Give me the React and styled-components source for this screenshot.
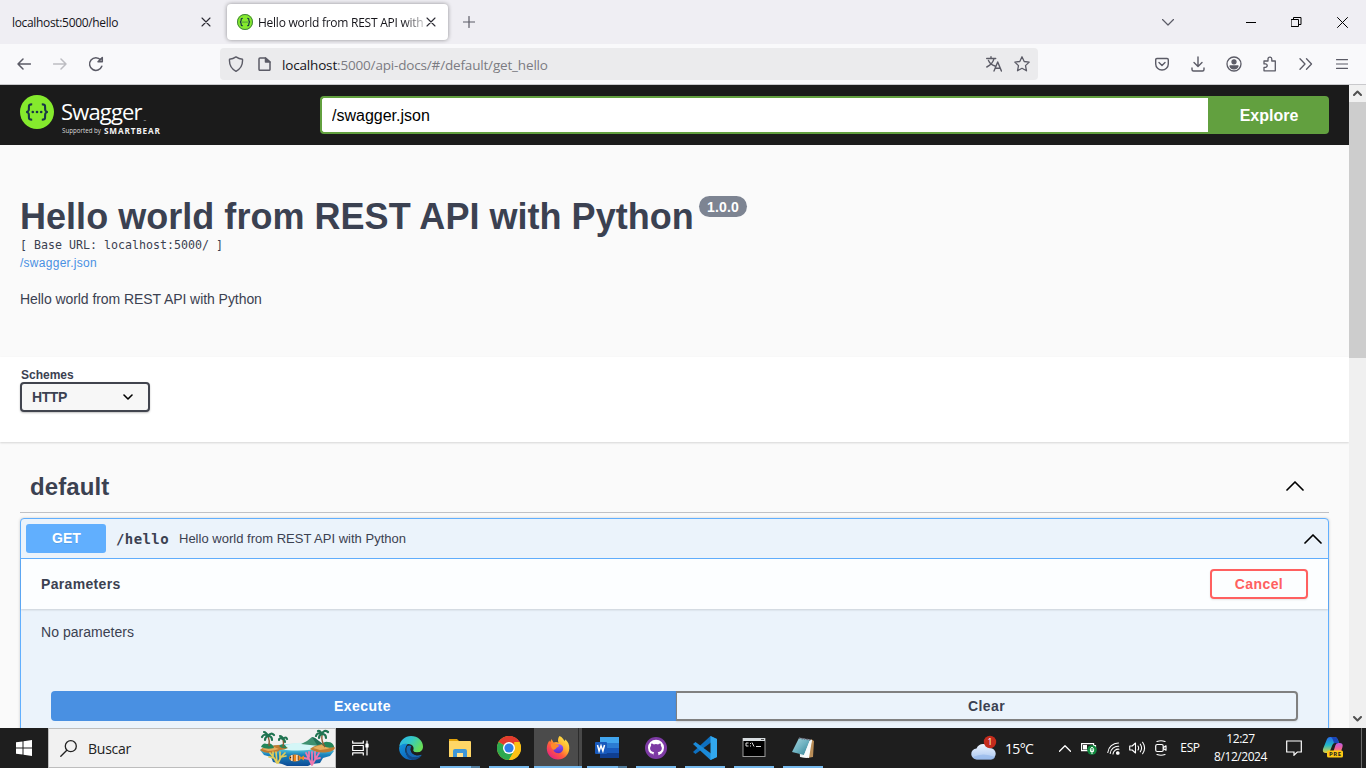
import React from "react";
import styled, { createGlobalStyle } from "styled-components";

const Global = createGlobalStyle`
  * { box-sizing: border-box; }
  body { margin: 0; overflow: hidden; background: #fafafa; }
  button, input { font-family: inherit; }
  svg { display: block; flex: none; }
`;

const ui = `"Open Sans", "Noto Sans", sans-serif`;
const arial = `"Liberation Sans", Arial, sans-serif`;
const mono = `"DejaVu Sans Mono", monospace`;

const Screen = styled.div`
  width: 1366px; height: 768px; display: flex; flex-direction: column;
  overflow: hidden; font-family: ${arial}; color: #3b4151;
`;

/* Browser chrome */
const TabStrip = styled.div`
  height: 44px; flex: none; background: #efeef3; display: flex; align-items: center;
  font-family: ${ui}; font-size: 12px; color: #15141a;
`;
const Tab = styled.div`
  width: ${p => p.$w}px; height: 36px; display: flex; align-items: center;
  padding: 0 ${p => p.$pr}px 0 ${p => p.$pl}px; margin-left: ${p => p.$ml || 0}px;
  border-radius: 4px;
  background: ${p => (p.$active ? "#fff" : "transparent")};
  box-shadow: ${p => (p.$active ? "0 0 4px rgba(0,0,0,.4)" : "none")};
`;
const TabLabel = styled.span`
  flex: 1; min-width: 0; white-space: nowrap; line-height: 18px; padding-top: 2px;
  letter-spacing: ${p => p.$ls || 0}px; margin-left: ${p => p.$ml || 0}px;
  -webkit-mask-image: ${p => (p.$fade ? "linear-gradient(90deg,#000 86%,transparent 103%)" : "none")};
`;
const Slot = styled.div`
  width: ${p => p.$w}px; height: 100%; flex: none; display: flex; align-items: center; justify-content: center;
  margin-left: ${p => p.$ml || 0}px;
`;
const Spacer = styled.div`flex: 1;`;
const NavBar = styled.div`
  height: 41px; flex: none; background: #f9f9fb; border-bottom: 1px solid #c9c9cc;
  display: flex; align-items: center; padding-left: 6px; padding-right: 6px;
`;
const UrlBar = styled.div`
  width: 818px; height: 32px; margin-left: 106px; border-radius: 4px; background: #ebebed;
  display: flex; align-items: center; font-family: ${ui};
`;
const Url = styled.span`
  flex: 1; margin-left: 6px; padding-top: 2px; font-size: 13.5px; letter-spacing: -0.17px; line-height: 20px; color: #7b7b82; white-space: nowrap;
  b { font-weight: 400; color: #15141a; }
`;

/* Page */
const Viewport = styled.div`height: 643px; flex: none; display: flex; overflow: hidden;`;
const Page = styled.main`width: 1349px; height: 643px; overflow: hidden; background: #fafafa;`;
const ScrollTrack = styled.div`
  width: 17px; height: 643px; background: #f0f0f0; display: flex; flex-direction: column; align-items: center;
`;
const ScrollThumb = styled.div`width: 17px; height: 256px; background: #cdcdcd;`;
const ScrollArrow = styled.div`width: 17px; height: 17px; display: flex; align-items: center; justify-content: center; padding-bottom: 1px;`;

const Topbar = styled.header`
  height: 60px; background: #1b1b1b; display: flex; align-items: center; padding: 0 20px;
`;
const Brand = styled.div`width: 300px; height: 60px; display: flex; padding-top: 10px;`;
const BrandText = styled.div`margin-left: 8px; font-family: ${ui}; color: #fff; display: flex; flex-direction: column;`;
const BrandName = styled.div`
  font-size: 22px; line-height: 26px; letter-spacing: -0.85px; height: 29px; padding-top: 3px; margin-left: -1px; white-space: nowrap;
  small { font-size: 5px; letter-spacing: 0; margin-left: 2px; }
`;
const BrandSub = styled.div`
  display: flex; align-items: center; height: 14px; font-size: 6.2px; line-height: 10px; color: #ddd; white-space: nowrap;
  b { font-size: 8.2px; letter-spacing: 0.85px; margin-left: 3px; color: #f2f2f2; font-weight: 700; }
`;
const SpecInput = styled.input`
  width: 888px; height: 38px; border: 2px solid #62a03f; border-right: 0; border-radius: 4px 0 0 4px;
  padding: 2px 10px 0; font-family: ${arial}; font-size: 16px; color: #000; background: #fff; outline: none;
`;
const ExploreButton = styled.button`
  width: 121px; height: 38px; border: 0; border-radius: 0 4px 4px 0; background: #62a03f; color: #fff;
  font-family: ${arial}; font-weight: 700; font-size: 16px; padding: 2px 0 0 1px;
`;

const Info = styled.section`height: 212px; padding: 50px 20px 0;`;
const TitleRow = styled.div`display: flex; align-items: flex-start; height: 43px;`;
const Title = styled.h2`margin: 1px 0 0; font-size: 36px; line-height: 42px; font-weight: 700; white-space: nowrap; letter-spacing: 0.03px; width: 673px;`;
const Version = styled.span`
  margin: 1px 0 0 6px; width: 48px; height: 21px; border-radius: 11px; background: #7d8492; color: #fff;
  font-size: 14px; font-weight: 700; line-height: 23px; text-align: center; letter-spacing: 0.15px;
`;
const BaseUrl = styled.div`font-family: ${mono}; font-size: 11.63px; line-height: 14px; height: 17px; white-space: pre;`;
const SpecLink = styled.div`font-size: 12px; line-height: 16px; color: #4990e2; letter-spacing: 0.27px;`;
const Description = styled.p`margin: 20px 0 0; font-size: 14px; line-height: 16px; letter-spacing: -0.06px;`;

const Schemes = styled.section`
  height: 85px; background: #fff; padding: 11px 20px 0; box-shadow: 0 1px 2px rgba(0,0,0,.15);
`;
const SchemesLabel = styled.div`font-size: 12px; font-weight: 700; line-height: 14px; padding-left: 1px;`;
const Select = styled.div`
  width: 130px; height: 30px; border: 2px solid #41444e; border-radius: 4px; background: #f7f7f7;
  box-shadow: 0 1px 2px rgba(0,0,0,.25); display: flex; align-items: center; justify-content: space-between;
  padding: 0 15px 0 10px; font-size: 14px; font-weight: 700; letter-spacing: -0.4px;
`;

const TagSection = styled.section`padding: 22px 20px 0;`;
const TagHeader = styled.h3`
  margin: 0 0 5px; height: 49px; border-bottom: 1px solid #c0c1c5; padding: 0 25px 5px 10px;
  display: flex; align-items: center; justify-content: space-between; font-size: 24px; font-weight: 700;
  span { padding-top: 3px; letter-spacing: 0.1px; }
`;
const OpBlock = styled.div`
  height: 240px; border: 1px solid #61affe; border-radius: 4px; background: #ebf3fb; box-shadow: 0 0 3px rgba(0,0,0,.19);
`;
const OpSummary = styled.div`
  height: 40px; border-bottom: 1px solid #61affe; display: flex; align-items: center; padding: 0 6px 0 5px;
`;
const Method = styled.span`
  width: 80px; height: 29px; border-radius: 3px; background: #61affe; color: #fff; font-size: 14px; font-weight: 700;
  line-height: 29px; text-align: center; padding-left: 1px; text-shadow: 0 1px 0 rgba(0,0,0,.1);
`;
const Path = styled.span`font-family: ${mono}; font-size: 14px; font-weight: 700; margin-left: 10px; letter-spacing: 0.4px; padding-top: 1px;`;
const Summary = styled.span`font-size: 13px; margin-left: 10px; flex: 1; letter-spacing: 0.01px;`;
const OpSectionHeader = styled.div`
  height: 50px; background: rgba(255,255,255,.85); box-shadow: 0 1px 2px rgba(0,0,0,.15);
  display: flex; align-items: center; justify-content: space-between; padding: 0 20px; font-size: 14px; font-weight: 700;
  letter-spacing: 0.33px;
`;
const Outline = styled.button`
  width: ${p => p.$w}px; height: 30px; border: 2px solid ${p => p.$line}; border-radius: ${p => p.$radius || "4px"};
  border-left-width: ${p => p.$left || 2}px;
  background: transparent; color: ${p => p.$ink}; font-family: ${arial}; font-size: 14px; font-weight: 700; padding: 0;
  letter-spacing: ${p => p.$ls || 0}px; box-shadow: 0 1px 2px rgba(0,0,0,.1);
`;
const NoParams = styled.div`height: 82px; padding: 15px 20px 0; font-size: 14px; line-height: 16px; letter-spacing: 0.04px;`;
const ButtonRow = styled.div`display: flex; padding: 0 30px;`;
const Execute = styled.button`
  width: 625px; height: 30px; border: 0; border-radius: 4px 0 0 4px; background: #4990e2; color: #fff; padding: 0 2px 0 0;
  font-family: ${arial}; font-size: 14px; font-weight: 700; letter-spacing: 0.45px;
`;

/* Taskbar */
const Taskbar = styled.footer`
  height: 40px; flex: none; background: #1e1e1e; display: flex; align-items: center; color: #fff; font-family: ${ui};
`;
const SearchBox = styled.div`
  width: 288px; height: 40px; background: #f1f1f1; border: 1px solid #bdbdbd; display: flex; align-items: center; padding-left: 11px;
  color: #222; font-size: 14px;
  span { margin-left: 11px; flex: 1; letter-spacing: -0.25px; }
`;
const TaskApp = styled.div`
  width: 49px; height: 40px; flex: none; display: flex; flex-direction: column; align-items: center; justify-content: space-between; padding-top: 8px;
  background: ${p => (p.$active ? "linear-gradient(90deg,transparent 0 1px,#4b4b4b 1px 45px,#2c2c2c 45px 46px,#484848 46px)" : "transparent")};
`;
const RunBar = styled.div`
  width: ${p => (p.$wide ? 48 : 40)}px; height: 2px; flex: none;
  background: ${p => (p.$split ? "linear-gradient(90deg,#76b9ed 0 31px,#527d9d 31px)" : p.$off ? "transparent" : "#76b9ed")};
`;
const Temp = styled.span`font-size: 14px; width: 30px; margin-left: 8px; letter-spacing: -0.65px; white-space: nowrap;`;
const Lang = styled.span`font-size: 12px; width: 22px; letter-spacing: -0.4px; text-align: center; padding-bottom: 1px;`;
const Clock = styled.div`
  width: 60px; display: flex; flex-direction: column; align-items: center; font-size: 12px; line-height: 18px; white-space: nowrap; letter-spacing: -0.45px;
`;
const ShowDesktop = styled.div`width: 5px; height: 40px; border-left: 1px solid #6a6a6a;`;

const Line = ({ w, h = w, sw = 1.2, color = "#5b5b66", children, vb }) => (
  <svg width={w} height={h} viewBox={vb || `0 0 ${w} ${h}`} fill="none" stroke={color} strokeWidth={sw} strokeLinecap="round" strokeLinejoin="round">{children}</svg>
);
const Close = () => <Line w={10} sw={1.1} color="#2b2a33"><path d="M1 1l8 8M9 1l-8 8" /></Line>;

const SwaggerMark = ({ size, dark = "#173647" }) => (
  <svg width={size} height={size} viewBox="0 0 34 34">
    <circle cx="17" cy="17" r="17" fill="#85ea2d" />
    {size < 20 && <circle cx="17" cy="17" r="16" fill="none" stroke="#3f7a47" strokeWidth="2" />}
    <g fill="none" stroke={dark} strokeWidth={size < 20 ? 2.6 : 2.1}>
      <path d="M12.2 9.2c-3 0-3.4 1-3.3 3.3 0 2.600.1 4-2.600 4.500 2.700.5 2.600 1.900 2.600 4.500-.1 2.300.3 3.300 3.300 3.300" />
      <path d="M21.800 9.200c3 0 3.400 1 3.300 3.300 0 2.600-.1 4 2.600 4.500-2.700.5-2.600 1.900-2.600 4.500.1 2.300-.3 3.300-3.300 3.300" />
    </g>
    <g fill={dark}><circle cx="12.800" cy="17" r="1.300" /><circle cx="17" cy="17" r="1.300" /><circle cx="21.200" cy="17" r="1.300" /></g>
  </svg>
);

const Chevron = () => <Line w={18} h={10} sw={1.700} color="#000"><path d="M1 9l8-8 8 8" /></Line>;

const Beach = () => (
  <svg width="76" height="38" viewBox="0 0 76 38">
    <defs>
      <linearGradient id="sea" x1="0" y1="0" x2="0" y2="1"><stop offset="0" stopColor="#9fe6f0" /><stop offset=".3" stopColor="#4bbad6" /><stop offset=".5" stopColor="#1b84bd" /><stop offset="1" stopColor="#0d4b95" /></linearGradient>
    </defs>
    <path d="M10 17q28-5 60 0l5 5-4 5-7 2-3 5-8 1-4 2H28l-5-2-9-2-2-5-7-2-4-5z" fill="url(#sea)" />
    <path d="M27 16q14-4 26-1l8 3q-12 5-34 3-6-1-8-3z" fill="#d4f6f7" />
    <path d="M42 15l6-3 5-4 3 1 3 3 5 3-4 2z" fill="#3f9070" />
    <path d="M53 8l3 1 8 6-6 1z" fill="#236f57" />
    <path d="M1 21q4-4 11-4 8-2 14 0l3 2q-4 2-8 2-3 3-10 3-6 0-10-3z" fill="#c07c32" />
    <path d="M3 20q5-3 12-2l5 2q-6 2-11 2z" fill="#e6ad5c" />
    <path d="M51 20q3-3 9-4 8-3 14 0l2 3q-1 3-7 4-10 2-18-3z" fill="#c07c32" />
    <path d="M54 19q7-4 16-3l4 2q-7 3-13 3z" fill="#e6ad5c" />
    <path d="M2 18q2-5 6-3 5-2 7 4-7 2-13-1zM20 17q3-3 6-1l2 3q-5 1-8-2zM63 16q2-4 6-3 5 0 6 5-7 2-12-2z" fill="#24865a" />
    <g fill="none" stroke="#8d5a32" strokeWidth="1.400"><path d="M9 7q2 5 1 10M24 10q1 4 0 8M63 6q-1 6 3 12" /></g>
    <g fill="none" stroke="#1f7350" strokeWidth="2.200" strokeLinecap="round"><path d="M9 7q-4-3-6 1M9 7q-2-4-4-4M9 7q3-4 6-1M9 7q4 0 4 4M9 7q-3 1-3 4M24 10q-4-2-4 1M24 10q-1-3-3-3M24 10q3-3 4 0M24 10q2 1 2 3M63 5q-5-2-6 2M63 5q-2-4-4-3M63 5q2-5 6-2M63 5q4 0 4 4M63 5q-3 1-3 4" /></g>
    <g fill="none" stroke="#e2cc58" strokeWidth="1.700" strokeLinecap="round"><path d="M18 34l-3-5-4-5M18 34l-1-11M19 34l3-6 4-4M15 29l-5-1M22 28l5-1M21 30v-7M14 27v-4" /></g>
    <g fill="none" stroke="#ec78ae" strokeWidth="1.800" strokeLinecap="round"><path d="M53 36l-3-6-3-6M53 36v-13M53 36l4-7 3-5M50 30l-5-1M56 30l5-1M50 28v-5M56 29v-6" /></g>
    <ellipse cx="36" cy="29" rx="6" ry="3.400" fill="#f28a1d" /><path d="M41 29l4-2.500v5z" fill="#f28a1d" />
    <path d="M33 26v6M38 26v6" stroke="#fff" strokeWidth="1.300" /><path d="M34.200 26v6M39.200 26.500v5" stroke="#333" strokeWidth=".7" /><circle cx="31.500" cy="28.500" r=".7" fill="#222" />
  </svg>
);

const Edge = () => (
  <svg width="24" height="24" viewBox="0 0 24 24">
    <defs>
      <linearGradient id="e1" x1="0" y1="0" x2="1" y2=".5"><stop offset="0" stopColor="#2bb2ef" /><stop offset=".5" stopColor="#34c8c6" /><stop offset="1" stopColor="#67de58" /></linearGradient>
      <linearGradient id="e2" x1="0" y1="0" x2=".7" y2="1"><stop offset="0" stopColor="#1496df" /><stop offset="1" stopColor="#0d62b8" /></linearGradient>
    </defs>
    <path d="M.2 11C1 4 6 0 12 0c7 0 12 5 12 10.500 0 4-3 6-6.500 6-2.500 0-4-.9-3.500-2 1.500-2 .5-6.500-5-6.500C4.500 8 1 9.500.2 11z" fill="url(#e1)" />
    <path d="M.1 11.500C1.500 8 5 7 9 8c-3 2-4 8-.5 12 1.500 2 4 3.700 6 3.500-1 .4-2 .5-3 .5C5 23.800-.4 18 .1 11.500z" fill="url(#e2)" />
    <path d="M8.200 10c-3 5 1 11.500 8 11.500 2.500 0 4.500-.7 6.200-2-2 3.200-5.500 4.700-8.500 4.400C8 23 4.500 16 8.200 10z" fill="#114a8b" />
    <path d="M8.200 10c-2.500 5 1 11.500 8 11.500 2.500 0 4.500-.7 6.200-2 .4-.7-.2-.9-.8-.5-4 1.500-10-.5-10-6 0-1.500.5-2.500.8-3-1.500-.8-3.200-.8-4.200 0z" fill="#1668b5" />
    <path d="M14.200 14.200c-.7-.8-2.200-1.200-2.600-1.200 0 4 3.400 6.300 7.500 6l2-.8q.8-1.300-.5-2.200c-1 .5-6 1-6.400-1.800z" fill="#1e1e1e" />
  </svg>
);
const Explorer = () => (
  <svg width="24" height="24" viewBox="0 0 24 24">
    <path d="M1 3h8l2 2v3H1z" fill="#e2a30b" /><path d="M1 5h21q1 0 1 1v15H1z" fill="#ffd666" />
    <path d="M5 21v-6q0-2 2-2h10q2 0 2 2v6h-4v-4H9v4z" fill="#3d97d9" /><path d="M9 17h6v4H9z" fill="#ffe291" />
  </svg>
);
const Chrome = () => (
  <svg width="24" height="24" viewBox="0 0 24 24">
    <circle cx="12" cy="12" r="12" fill="#fbc116" />
    <path d="M12 12L1.600 6A12 12 0 0 1 22.400 6z" fill="#e33b2e" /><path d="M12 6h10.400A12 12 0 0 0 12 0z" fill="#e33b2e" />
    <path d="M1.600 6A12 12 0 0 0 12 24l5.200-9L12 12z" fill="#2da94f" />
    <path d="M12 24l5.200-9a6 6 0 0 0 0-6V6h5.200A12 12 0 0 1 12 24z" fill="#fbc116" />
    <circle cx="12" cy="12" r="6" fill="#fff" /><circle cx="12" cy="12" r="4.600" fill="#2e7de9" />
  </svg>
);
const Firefox = () => (
  <svg width="24" height="24" viewBox="0 0 24 24">
    <defs>
      <linearGradient id="f1" x1=".9" y1=".1" x2=".15" y2="1"><stop offset="0" stopColor="#ffe94a" /><stop offset=".35" stopColor="#ffaf2e" /><stop offset=".6" stopColor="#ff5b3c" /><stop offset="1" stopColor="#e5178e" /></linearGradient>
      <linearGradient id="f2" x1="0" y1="0" x2="0" y2="1"><stop offset="0" stopColor="#9059ff" /><stop offset="1" stopColor="#5a2bc4" /></linearGradient>
    </defs>
    <path d="M13.500 0c3 1.300 4 3.500 5 5 .8-.5.800-1 .700-1.700C22 5.500 23.500 9 23.300 12.500 23 19 18 23.500 12 23.500S.8 19 .8 12.500c0-3.500 1.200-6 2.700-8L4 6.500 5.500 3l2 3.500q3-1 5 .2C11.500 4.500 12 2 13.500 0z" fill="url(#f1)" />
    <path d="M8 10c2-1 5-3 8-.5 2.500 2.500 1 7.500-3.500 7.700C9 17.300 7 15 7.500 12.500z" fill="url(#f2)" />
    <path d="M5 8c2-1 4-.5 5 .8 1 .2 2.500.200 3 .7-.3 1.500-2 1.500-2.700 2.500-.8 1.500-2 2-3.300 1.500C5.500 12.500 4.500 10.500 5 8z" fill="#ff8a2a" />
  </svg>
);
const Word = () => (
  <svg width="24" height="24" viewBox="0 0 24 24">
    <path d="M5 1h19v6H5z" fill="#41a5ee" /><path d="M5 7h19v5H5z" fill="#2b7cd3" /><path d="M5 12h19v5H5z" fill="#185abd" /><path d="M5 17h19v5H5z" fill="#103f91" />
    <rect x="0" y="6" width="12" height="12" rx="1" fill="#185abd" />
    <path d="M2.500 9l1.600 6L6 9.800 7.900 15 9.500 9" fill="none" stroke="#fff" strokeWidth="1.500" />
  </svg>
);
const GitHub = () => (
  <svg width="24" height="24" viewBox="0 0 24 24">
    <circle cx="12" cy="12" r="11" fill="#7d3aa4" />
    <circle cx="12" cy="11.700" r="8" fill="#fff" />
    <path d="M9.300 24v-4.500c0-1 .2-1.500.7-2-3-.4-4.700-2-4.700-5 0-1.300.4-2.300 1.200-3.200-.2-.9-.2-1.900.2-2.900 1.200 0 2.100.600 2.900 1.200a9 9 0 0 1 4.800 0c.8-.6 1.700-1.200 2.900-1.200.4 1 .4 2 .2 2.900.8.900 1.200 1.900 1.200 3.200 0 3-1.700 4.600-4.700 5 .5.5.7 1 .7 2V24z" transform="translate(1.400 2.300) scale(.88 .8)" fill="#7d3aa4" />
    <path d="M9.500 18.500q-2 .3-3-1.500" fill="none" stroke="#7d3aa4" />
  </svg>
);
const VSCode = () => (
  <svg width="24" height="24" viewBox="0 0 24 24">
    <path d="M17.500 0L24 3l-6 3.500L2.500 18 0 16z" fill="#0e70c0" /><path d="M17.500 24L24 21l-6-3.500L2.500 6 0 8z" fill="#1b8ad8" />
    <path d="M17.500 0L24 3v18l-6.500 3z" fill="#32a8ee" />
  </svg>
);
const Terminal = () => (
  <svg width="24" height="24" viewBox="0 0 24 24">
    <rect x="1" y="2.500" width="22" height="18" fill="#000" stroke="#9a9a9a" /><path d="M1 2h22v3H1z" fill="#d8dde0" />
    <path d="M6.500 7H4v3h2.500M8.500 7v1M8.500 9.500v1M10 6.500l2 4M14 10.500h5" stroke="#ddd" fill="none" />
    <path d="M19 3.500h3" stroke="#555" />
  </svg>
);
const Notepad = () => (
  <svg width="24" height="24" viewBox="0 0 24 24">
    <defs><linearGradient id="n1" x1="0" y1="0" x2="1" y2="1"><stop offset="0" stopColor="#a8d6df" /><stop offset=".5" stopColor="#6fb3c2" /><stop offset="1" stopColor="#2f7f92" /></linearGradient></defs>
    <path d="M20 3l3 2-1 16-6 1z" fill="#b98d57" /><path d="M8 2l13 2-5 18-7-1z" fill="#e8eef0" /><path d="M8 2l11 2-6 15L1 16z" fill="url(#n1)" /><path d="M19 4l2 0-3 18-8-1 3-2z" fill="#f7fbfc" />
    <path d="M8 2l12 2" stroke="#667" strokeWidth="1.500" strokeDasharray="1.500 1" />
  </svg>
);
const Weather = () => (
  <svg width="26" height="26" viewBox="0 0 26 26">
    <defs><linearGradient id="w1" x1="0" y1="0" x2="0" y2="1"><stop offset="0" stopColor="#eef5ff" /><stop offset="1" stopColor="#a9c6f0" /></linearGradient></defs>
    <path d="M6 24.500a5.500 5.500 0 0 1-.5-11A7.500 7.500 0 0 1 19 13a5.800 5.800 0 0 1 1 11.500z" fill="url(#w1)" />
    <path d="M2 22q10-5 22 0-1 2.500-3 2.500H6q-3 0-4-2.500z" fill="#8fb4ea" opacity=".6" />
    <circle cx="19" cy="7" r="6.200" fill="#c42b1c" />
    <text x="19" y="10" fontSize="8.500" textAnchor="middle" fill="#fff" fontFamily="Open Sans">1</text>
  </svg>
);
const Copilot = () => (
  <svg width="22" height="22" viewBox="0 0 22 22">
    <defs>
      <linearGradient id="c1" x1="0" y1="0" x2="0" y2="1"><stop offset="0" stopColor="#2a6be8" /><stop offset=".5" stopColor="#20b8c8" /><stop offset="1" stopColor="#e8d23a" /></linearGradient>
      <linearGradient id="c2" x1="0" y1="0" x2="0" y2="1"><stop offset="0" stopColor="#b85de8" /><stop offset=".5" stopColor="#f0609a" /><stop offset="1" stopColor="#ff9e4a" /></linearGradient>
    </defs>
    <path d="M5 2q1-2 3-2h5q2 0 3 3l1 3h-4q-2 0-2.600 2L8 14q-.6 2-3 2H4q-4 0-3-4z" fill="url(#c1)" />
    <path d="M13 0q2 0 3 3l1 3h-5l-1-3q-.6-2-2-3z" fill="#1b46b8" />
    <path d="M11 16l2.500-8q.6-2 3-2h1q4 0 3 4l-2 6z" fill="url(#c2)" />
    <rect x="5" y="13.500" width="16" height="7" rx="1.500" fill="#ffc814" />
    <text x="13" y="19.300" fontSize="6" fontWeight="700" textAnchor="middle" fill="#222" fontFamily="Open Sans" textLength="12">PRE</text>
  </svg>
);

const apps = [
  { id: "edge", Icon: Edge, off: true },
  { id: "explorer", Icon: Explorer, split: true },
  { id: "chrome", Icon: Chrome },
  { id: "firefox", Icon: Firefox, active: true },
  { id: "word", Icon: Word, split: true },
  { id: "github", Icon: GitHub },
  { id: "vscode", Icon: VSCode },
  { id: "terminal", Icon: Terminal },
  { id: "notepad", Icon: Notepad },
];

export default function App() {
  return (
    <Screen>
      <Global />
      <TabStrip>
        <Tab $w={223} $pl={12} $pr={12}>
          <TabLabel $ls={-0.33}>localhost:5000/hello</TabLabel><Close />
        </Tab>
        <Tab $active $w={221} $pl={10} $pr={12} $ml={4}>
          <SwaggerMark size={16} />
          <TabLabel $fade $ml={5} $ls={-0.25}>Hello world from REST API with</TabLabel><Close />
        </Tab>
        <Slot $w={24} $ml={9}><Line w={12} sw={1.2}><path d="M6 .5v11M.5 6h11" /></Line></Slot>
        <Spacer />
        <Slot $w={40}><Line w={12} h={7}><path d="M.5.5L6 6 11.500.5" /></Line></Slot>
        <Slot $w={46} $ml={40}><Line w={10} h={1} sw={2} color="#000"><path d="M0 .5h10" /></Line></Slot>
        <Slot $w={45}><Line w={11} sw={1} color="#000"><path d="M.5 2.500h7v7h-7zM2.500 2V.5h7.500v7H8" strokeLinejoin="miter" /></Line></Slot>
        <Slot $w={47}><Line w={11} sw={1} color="#000"><path d="M.5.5l10 10M10.500.5l-10 10" /></Line></Slot>
      </TabStrip>

      <NavBar>
        <Slot $w={36}><Line w={14} h={12} sw={1.5}><path d="M13.500 6H1M6 1L1 6l5 5" /></Line></Slot>
        <Slot $w={36}><Line w={14} h={12} sw={1.500} color="#bdbdc2"><path d="M.5 6H13M8 1l5 5-5 5" /></Line></Slot>
        <Slot $w={36}><Line w={16} sw={1.500}><path d="M13.800 10.200A6.300 6.300 0 1 1 12.700 4M14.300 1.500v4.300H10z" /></Line></Slot>
        <UrlBar>
          <Slot $w={32}><Line w={16} sw={1.400}><path d="M8 .9q3 2.200 6.500 2.300c.4 5.200-1.500 9.500-6.500 12.100C3 12.700 1.100 8.400 1.500 3.200Q5 3.100 8 .9z" /></Line></Slot>
          <Slot $w={24}><Line w={13} h={14} sw={1.500}><path d="M1 2q0-1 1-1h5.500L12 5v7.500q0 .8-1 .8H2q-1 0-1-1z" /><path d="M7.500 1v4H12z" fill="#5b5b66" /></Line></Slot>
          <Url><b>localhost</b>:5000/api-docs/#/default/get_hello</Url>
          <Slot $w={28}><Line w={16} sw={1.400}><path d="M.7 2.500h9M5 .8v1.700M2.500 4.500C4 8 6.500 9.300 9 10M8 2.700C7 7 4 9.500.8 11M8 15l3.700-9 3.700 9M9.300 12.300h4.800" /></Line></Slot>
          <Slot $w={28}><Line w={16} sw={1.300}><path d="M8 .8l2.200 4.700 5 .6-3.700 3.500 1 5.200L8 12.300l-4.500 2.500 1-5.200L.8 6.100l5-.6z" /></Line></Slot>
          <Slot $w={2} />
        </UrlBar>
        <Spacer />
        <Slot $w={36}><Line w={14} sw={1.400}><path d="M2 1.500h10q1.300 0 1.300 1.300V7A6.300 6 0 0 1 .7 7V2.800Q.7 1.500 2 1.500zM4 5.500l3 3 3-3" /></Line></Slot>
        <Slot $w={36}><Line w={14} h={16} sw={1.400}><path d="M7 1v9M3 6.500l4 4 4-4M1 12v1.500Q1 15 2.500 15h9q1.500 0 1.500-1.500V12" /></Line></Slot>
        <Slot $w={36}><Line w={16} sw={1.300}><circle cx="8" cy="8" r="7" /><circle cx="8" cy="5.800" r="2" fill="#5b5b66" /><path d="M4 10h8q-1 2.800-4 2.800T4 10z" fill="#5b5b66" /></Line></Slot>
        <Slot $w={36}><Line w={16} sw={1.300}><path d="M2 5h4V3a1.900 1.900 0 0 1 3.800 0v2h3.500v9.800H2v-3.500h1.500a1.700 1.700 0 0 0 0-3.400H2z" /></Line></Slot>
        <Slot $w={35}><Line w={14} h={12} sw={1.300}><path d="M1 .8L6 6 1 11.200M7.500.8l5 5.200-5 5.200" /></Line></Slot>
        <Slot $w={37}><Line w={12} h={10} sw={1.200}><path d="M.5 .6h11M.5 5h11M.5 9.400h11" /></Line></Slot>
      </NavBar>

      <Viewport>
        <Page>
          <Topbar>
            <Brand>
              <SwaggerMark size={34} />
              <BrandText>
                <BrandName>Swagger<small>_</small></BrandName>
                <BrandSub>Supported by <b>SMARTBEAR</b></BrandSub>
              </BrandText>
            </Brand>
            <SpecInput defaultValue="/swagger.json" />
            <ExploreButton>Explore</ExploreButton>
          </Topbar>

          <Info>
            <TitleRow>
              <Title>Hello world from REST API with Python</Title>
              <Version>1.0.0</Version>
            </TitleRow>
            <BaseUrl>[ Base URL: localhost:5000/ ]</BaseUrl>
            <SpecLink>/swagger.json</SpecLink>
            <Description>Hello world from REST API with Python</Description>
          </Info>

          <Schemes>
            <SchemesLabel>Schemes</SchemesLabel>
            <Select>HTTP<Line w={10} h={6} sw={1.600} color="#000"><path d="M1 1l4 4 4-4" /></Line></Select>
          </Schemes>

          <TagSection>
            <TagHeader><span>default</span><Chevron /></TagHeader>
            <OpBlock>
              <OpSummary>
                <Method>GET</Method>
                <Path>/hello</Path>
                <Summary>Hello world from REST API with Python</Summary>
                <Chevron />
              </OpSummary>
              <OpSectionHeader>
                Parameters
                <Outline $w={98} $line="#ff6060" $ink="#ff6060" $ls={0.4}>Cancel</Outline>
              </OpSectionHeader>
              <NoParams>No parameters</NoParams>
              <ButtonRow>
                <Execute>Execute</Execute>
                <Outline $w={622} $line="#808080" $ink="#3b4151" $radius="0 4px 4px 0" $left={1} $ls={0.4}>Clear</Outline>
              </ButtonRow>
            </OpBlock>
          </TagSection>
        </Page>
        <ScrollTrack>
          <ScrollArrow><Line w={9} h={6} sw={2} color="#505050"><path d="M1 5l3.500-3.500L8 5" /></Line></ScrollArrow>
          <ScrollThumb />
          <Spacer />
          <ScrollArrow><Line w={9} h={6} sw={2} color="#505050"><path d="M1 1l3.500 3.500L8 1" /></Line></ScrollArrow>
        </ScrollTrack>
      </Viewport>

      <Taskbar>
        <Slot $w={48}>
          <svg width="16" height="16" viewBox="0 0 16 16" fill="#fff"><path d="M0 2.300L6.500 1.400v6.100H0zM7.500 1.200L16 0v7.500H7.500zM0 8.500h6.500v6.100L0 13.700zM7.500 8.500H16V16l-8.500-1.200z" /></svg>
        </Slot>
        <SearchBox>
          <Line w={17} sw={1.300} color="#222"><circle cx="10.800" cy="6.200" r="5.500" /><path d="M6.800 10.200L.8 16.200" /></Line>
          <span>Buscar</span>
          <Beach />
        </SearchBox>
        <Slot $w={49}>
          <Line w={17} h={16} sw={1.200} color="#fff"><path d="M.7 1v2.200h10.600V1M.7 15v-2.200h10.600V15M.7 5.500h10.600v5H.7zM15 1v14" /><path d="M14 4h2v3h-2z" fill="#fff" /></Line>
        </Slot>
        <Slot $w={1} />
        {apps.map(({ id, Icon, off, split, active }) => (
          <TaskApp key={id} $active={active}><Icon /><RunBar $off={off} $split={split} $wide={active} /></TaskApp>
        ))}
        <Spacer />
        <Weather />
        <Temp>15°C</Temp>
        <Slot $w={24} $ml={18}><Line w={12} h={7} sw={1.300} color="#fff"><path d="M.5 6.300L6 .8l5.500 5.500" /></Line></Slot>
        <Slot $w={24}>
          <svg width="16" height="14" viewBox="0 0 16 14"><path d="M.6 2.600h12v7H.6zM13 4.500h1.500v3H13" fill="none" stroke="#fff" strokeWidth="1.200" /><path d="M2 4h4v4.500H2z" fill="#fff" /><circle cx="11" cy="9" r="4.800" fill="#10893e" /><path d="M11 6q2.500 2 1.500 4.500H9.500Q8.500 8 11 6zM11 8v5" fill="none" stroke="#fff" strokeWidth="1" /></svg>
        </Slot>
        <Slot $w={24}>
          <Line w={13} h={13} sw={1.100} color="#fff"><path d="M.8 10.500A10.500 10.500 0 0 1 11.500 1M3.200 11.500a8 8 0 0 1 8.500-7.300M6 12a5.300 5.300 0 0 1 6-4.800" /><circle cx="10.800" cy="11" r="1.300" fill="#fff" /></Line>
        </Slot>
        <Slot $w={24}>
          <Line w={17} h={14} sw={1.100} color="#fff"><path d="M.7 5v4h2.500L6.500 12V2L3.200 5zM9 5q1.300 2 0 4M11.300 3.200q2.600 3.800 0 7.600M13.600 1.300q4 5.700 0 11.400" /></Line>
        </Slot>
        <Slot $w={24}>
          <Line w={12} h={16} sw={1.200} color="#fff"><rect x=".7" y="4.500" width="7.500" height="7" rx="1.500" /><path d="M8.500 7.500L11 5.800v4.400L8.500 8.700M2 1.500q4-1.500 8 0M2 14.500q4 1.500 8 0" /></Line>
        </Slot>
        <Slot $w={34}><Lang>ESP</Lang></Slot>
        <Slot $w={67}><Clock><span>12:27</span><span>8/12/2024</span></Clock></Slot>
        <Slot $w={39}><Line w={16} h={16} sw={1.200} color="#fff"><path d="M.7 1h14.600v11h-4L8 15.200V12H.7z" strokeLinejoin="miter" /></Line></Slot>
        <Slot $w={40}><Copilot /></Slot>
        <Slot $w={8} />
        <ShowDesktop />
      </Taskbar>
    </Screen>
  );
}
